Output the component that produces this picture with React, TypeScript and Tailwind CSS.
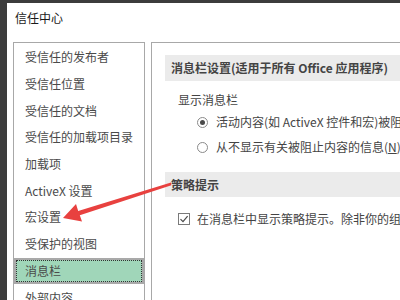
import React from 'react'

const items = [
  '受信任的发布者',
  '受信任位置',
  '受信任的文档',
  '受信任的加载项目录',
  '加载项',
  'ActiveX 设置',
  '宏设置',
  '受保护的视图',
  '消息栏',
  '外部内容',
]

function Radio({ checked }: { checked?: boolean }) {
  return (
    <span className="w-[11px] h-[11px] rounded-full border border-[#8a8a8a] bg-white flex items-center justify-center shrink-0">
      {checked && <span className="w-[5px] h-[5px] rounded-full bg-[#4a4a4a]" />}
    </span>
  )
}

export default function App() {
  return (
    <div className="relative w-[400px] h-[300px] overflow-hidden bg-[#3c3c3c] pl-[7px] pt-[3px] font-['Noto_Sans_CJK_SC',sans-serif] text-[12px]">
      <div className="bg-white h-full flex flex-col">
        {/* title */}
        <div className="h-[39px] pl-[8px] pt-[7px] leading-[16px] text-[#1a1a1a] shrink-0">信任中心</div>

        <div className="flex flex-1 min-h-0 pl-[6px] gap-[6px]">
          {/* left nav */}
          <div className="w-[132px] shrink-0 border border-b-0 border-[#a8a8a8] pt-[1px] overflow-hidden">
            {items.map(t =>
              t === '消息栏' ? (
                <div key={t} className="h-[26.7px] border-2 border-[#a9a9a9] bg-[#a0d6b9]">
                  <div className="h-full border border-dotted border-[#333] pl-[8px] flex items-center leading-[16px] text-[#4a4a4a] whitespace-nowrap">
                    {t}
                  </div>
                </div>
              ) : (
                <div key={t} className="h-[26.7px] pl-[11px] flex items-center leading-[16px] text-[#4a4a4a] whitespace-nowrap">
                  {t}
                </div>
              )
            )}
          </div>

          {/* right content */}
          <div className="flex-1 min-w-0 border-l border-t border-[#a8a8a8] pl-[13px] pt-[12px] overflow-hidden text-[#444]">
            <div className="h-[26px] bg-[#ebebeb] pl-[6px] flex items-center font-bold leading-[16px] whitespace-nowrap">
              消息栏设置(适用于所有 Office 应用程序)
            </div>
            <div className="mt-[9px] h-[20px] pl-[13px] flex items-center leading-[16px] whitespace-nowrap">显示消息栏</div>
            <div className="mt-[2px] h-[20px] pl-[32px] flex items-center gap-[8px] leading-[16px] whitespace-nowrap">
              <Radio checked />
              <span>活动内容(如 ActiveX 控件和宏)被阻止时，在所有应用程序中显示消息栏</span>
            </div>
            <div className="mt-[5px] h-[20px] pl-[32px] flex items-center gap-[8px] leading-[16px] whitespace-nowrap">
              <Radio />
              <span>
                从不显示有关被阻止内容的信息(<span className="underline">N</span>)
              </span>
            </div>
            <div className="mt-[15px] h-[25px] bg-[#ebebeb] pl-[6px] flex items-center font-bold leading-[16px] whitespace-nowrap">
              策略提示
            </div>
            <div className="mt-[12px] h-[20px] pl-[13px] flex items-center gap-[7px] leading-[16px] whitespace-nowrap">
              <span className="w-[12px] h-[12px] border border-[#7a7a7a] bg-white flex items-center justify-center shrink-0">
                <svg width="10" height="10" viewBox="0 0 10 10">
                  <path d="M1.5 5.2 L4 7.7 L8.6 2.2" fill="none" stroke="#4a4a4a" strokeWidth="1.2" />
                </svg>
              </span>
              <span>在消息栏中显示策略提示。除非你的组织已关闭此功能。</span>
            </div>
          </div>
        </div>
      </div>

      {/* red annotation arrow */}
      <svg className="absolute left-0 top-0 pointer-events-none" width="400" height="300" viewBox="0 0 400 300">
        <polygon
          points="63,218 76,204 78.2,211 171,182.6 171.4,185.2 79.8,215.2 82,221.5"
          fill="#e8413f"
        />
      </svg>
    </div>
  )
}
